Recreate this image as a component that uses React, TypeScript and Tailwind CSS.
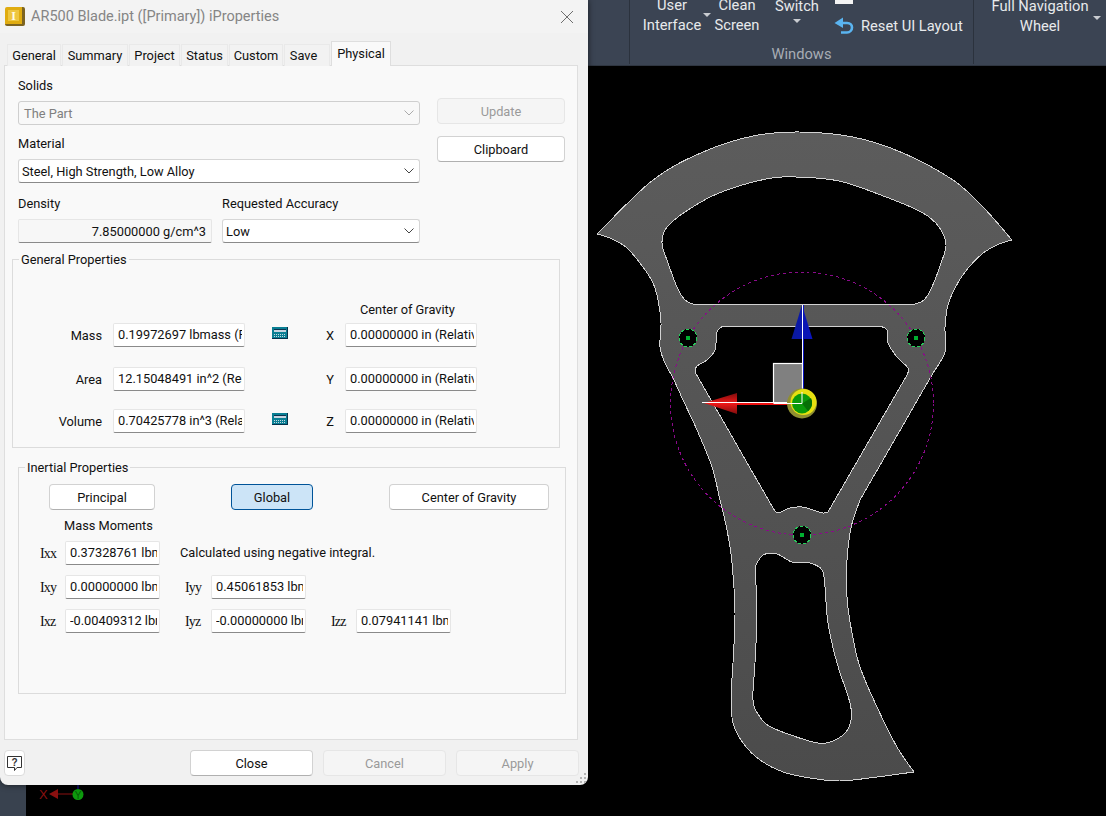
import React from "react";

type P = [number, number];
function seg(pts: P[], move = true): string {
  let d = move ? `M${pts[0][0]} ${pts[0][1]}` : `L${pts[0][0]} ${pts[0][1]}`;
  for (let i = 0; i < pts.length - 1; i++) {
    const p0 = pts[i - 1] || pts[i];
    const p1 = pts[i];
    const p2 = pts[i + 1];
    const p3 = pts[i + 2] || p2;
    const c1 = [p1[0] + (p2[0] - p0[0]) / 6, p1[1] + (p2[1] - p0[1]) / 6];
    const c2 = [p2[0] - (p3[0] - p1[0]) / 6, p2[1] - (p3[1] - p1[1]) / 6];
    d += `C${c1[0].toFixed(1)} ${c1[1].toFixed(1)} ${c2[0].toFixed(1)} ${c2[1].toFixed(1)} ${p2[0]} ${p2[1]}`;
  }
  return d;
}

const outer =
  seg([[597, 234], [653, 180], [703, 152], [753, 136], [799, 132], [853, 137], [903, 153], [953, 180], [983, 207], [1012, 240]]) +
  seg([[1012, 240], [999, 244], [982, 254], [965, 272], [955, 288], [948, 305], [945, 327], [945, 352], [933, 373]], false) +
  seg([[860, 500], [853, 520], [850, 533], [847, 560], [847, 597], [852, 633], [860, 667], [877, 707], [897, 747], [914, 772]], false) +
  seg([[914, 772], [877, 777], [840, 781], [810, 778], [783, 772], [760, 760], [743, 743], [733, 723], [731, 697], [733, 663], [735, 613], [732, 563], [727, 530], [720, 500], [712, 467], [697, 430], [683, 400], [673, 378], [665, 363], [660, 347], [661, 323], [658, 300], [653, 283], [643, 267], [627, 248], [610, 238], [597, 234]], false) +
  "Z";
const hole1 =
  seg([[693, 304], [685, 300], [677, 287], [668, 263], [662, 243], [667, 227], [688, 210], [719, 193], [766, 179], [796, 177], [839, 181], [886, 197], [923, 213], [939, 227], [946, 245], [941, 263], [932, 287], [924, 300], [915, 304]]) + "Z";
const hole2 =
  seg([[880, 326], [887, 330], [888, 343], [897, 357], [908, 368], [907, 375]]) +
  seg([[828, 512], [823, 513], [813, 510], [802, 507], [790, 508], [778, 513], [773, 508]], false) +
  seg([[695, 372], [697, 366], [707, 360], [715, 350], [717, 332], [723, 326]], false) + "Z";
const hole3 =
  seg([[755, 567], [763, 555], [777, 554], [792, 562], [810, 563], [822, 570], [825, 587], [828, 623], [837, 663], [850, 703], [851, 720], [845, 733], [830, 742], [813, 742], [773, 728], [760, 717], [753, 700], [755, 663], [757, 613], [755, 567]]) + "Z";

function Chevron({ dim }: { dim?: boolean }) {
  return (
    <svg width="10" height="6" viewBox="0 0 10 6" className="shrink-0">
      <polyline points="0.5,0.5 5,5 9.5,0.5" fill="none" stroke={dim ? "#aaaaaa" : "#444444"} strokeWidth="1" />
    </svg>
  );
}

function Combo({ text, dim, className }: { text: string; dim?: boolean; className: string }) {
  return (
    <div className={`flex h-6 items-center justify-between rounded-[3px] border pr-[5px] ${dim ? "border-[#cfcfcf] bg-[#f8f8f8] pl-[5px] text-[#808080]" : "border-[#d6d6d6] border-b-[#8a8a8a] bg-white pl-[3px]"} ${className}`}>
      <span className="pt-px">{text}</span>
      <Chevron dim={dim} />
    </div>
  );
}

function Btn({ text, kind = "normal", className }: { text: string; kind?: "normal" | "dim" | "active"; className: string }) {
  const look =
    kind === "dim"
      ? "border-[#e6e6e6] bg-[#f5f5f5] text-[#9a9a9a]"
      : kind === "active"
      ? "border-[#005499] bg-[#cce4f7]"
      : "border-[#d2d2d2] border-b-[#b0b0b0] bg-white";
  return <div className={`flex h-[26px] items-center justify-center rounded-[4px] border pt-px ${look} ${className}`}>{text}</div>;
}

function Field({ text, className }: { text: string; className: string }) {
  return (
    <div className={`h-6 shrink-0 rounded-[2px] border border-[#e6e6e6] border-b-[#8a8a8a] bg-white pl-[4px] pr-[2px] leading-[22px] ${className}`}>
      <div className="overflow-hidden whitespace-nowrap">{text}</div>
    </div>
  );
}

function Calc() {
  return (
    <svg width="16" height="12" viewBox="0 0 16 12" className="mb-1 shrink-0">
      <rect x="0" y="0" width="16" height="12" fill="#0a7f94" />
      <path d="M0 11.5H16M15.5 0V12" stroke="#05304a" strokeWidth="1" />
      <rect x="2" y="2" width="12" height="3" fill="#c8d4e0" />
      <path d="M2 2.5H14" stroke="#0b3350" strokeWidth="1" />
      <path d="M2 7.5H14M2 9.5H14" stroke="#c4d8e0" strokeWidth="1" strokeDasharray="1 1" />
    </svg>
  );
}

function GenRow({ label, axis, value, axisValue, calc, className }: { label: string; axis: string; value: string; axisValue: string; calc?: boolean; className: string }) {
  return (
    <div className={`flex h-6 items-center ${className}`}>
      <div className="w-[89px] pt-[2px] text-right">{label}</div>
      <Field text={value} className="ml-[11px] w-[132px]" />
      <div className="ml-[27px] flex w-4 justify-center">{calc && <Calc />}</div>
      <div className="ml-[34px] w-4 pt-[2px] text-center">{axis}</div>
      <Field text={axisValue} className="ml-[7px] w-[132px]" />
    </div>
  );
}

function ILabel({ text, className }: { text: string; className: string }) {
  return <div className={`pt-[1px] font-['Liberation_Serif',serif] text-[14px] tracking-[-0.8px] ${className}`}>{text}</div>;
}

const tabs: [string, string][] = [
  ["General", "w-[54px]"],
  ["Summary", "w-[66px]"],
  ["Project", "w-[51px]"],
  ["Status", "w-[47px]"],
  ["Custom", "w-[54px]"],
  ["Save", "w-[46px] pr-[7px]"],
];

function Dialog() {
  return (
    <div className="absolute left-0 top-0 flex h-[785px] w-[588px] flex-col rounded-b-[8px] bg-[#f1f1f1] font-['Roboto',sans-serif] text-[12.8px] text-[#111111] shadow-[0_0_6px_rgba(0,0,0,0.6)]">
      <div className="flex h-[33px] shrink-0 items-center bg-[#f3f3f3] pl-[5px] pr-[14px]">
        <div className="flex h-[19px] w-5 items-center justify-center rounded-[2px] border-b-2 border-r-[3px] border-[#7d6420] bg-[#e0ac10]">
          <div className="flex h-[11px] w-[11px] items-center justify-center bg-[#eec640] font-['Liberation_Serif',serif] text-[12px] font-bold leading-none text-[#fffbe8]">I</div>
        </div>
        <div className="ml-[6px] flex-1 text-[14.5px] text-[#858585]">AR500 Blade.ipt ([Primary]) iProperties</div>
        <svg width="14" height="14" viewBox="0 0 14 14">
          <path d="M1 1L13 13M13 1L1 13" stroke="#6e6e6e" strokeWidth="1" />
        </svg>
      </div>

      <div className="z-10 -mb-px flex h-[33px] shrink-0 items-end pl-[7px]">
        {tabs.map(([t, w]) => (
          <div key={t} className={`mr-px flex h-[22px] items-center justify-center border-x border-t border-[#e9e9e9] bg-[#f2f2f2] pt-px ${w}`}>{t}</div>
        ))}
        <div className="flex h-[25px] w-[60px] items-center justify-center border-x border-t border-[#dedede] bg-[#f9f9f9] pb-[1px]">Physical</div>
      </div>

      <div className="ml-1 h-[675px] w-[574px] shrink-0 border border-[#dedede] bg-[#f9f9f9]">
        <div className="flex pl-[13px]">
          <div className="w-[402px]">
            <div className="mt-3 h-4 leading-4">Solids</div>
            <Combo text="The Part" dim className="mt-[7px] w-full" />
            <div className="mt-[10px] h-4 pt-px leading-4">Material</div>
            <Combo text="Steel, High Strength, Low Alloy" className="mt-2 w-full" />
            <div className="mt-3 flex h-4 pt-px leading-4">
              <div className="w-[204px]">Density</div>
              <div>Requested Accuracy</div>
            </div>
            <div className="mt-2 flex gap-[10px]">
              <div className="flex h-6 w-[194px] items-center justify-end rounded-[2px] border border-[#e6e6e6] border-b-[#8a8a8a] bg-[#f7f7f7] pr-[5px] pt-px">7.85000000 g/cm^3</div>
              <Combo text="Low" className="w-[198px]" />
            </div>
          </div>
          <div className="ml-[17px] w-[128px] pt-8">
            <Btn text="Update" kind="dim" className="w-full" />
            <Btn text="Clipboard" className="mt-3 w-full" />
          </div>
        </div>

        <div className="relative ml-[7px] mt-4 h-[189px] w-[548px] border border-[#dcdcdc] pt-[42px]">
          <div className="absolute -top-[8px] left-[6px] bg-[#f9f9f9] px-[2px] leading-4">General Properties</div>
          <div className="ml-[347px] h-4 leading-4">Center of Gravity</div>
          <GenRow label="Mass" axis="X" value="0.19972697 lbmass (Relative" axisValue="0.00000000 in (Relative" calc className="mt-[5px]" />
          <GenRow label="Area" axis="Y" value="12.15048491 in^2 (Relative" axisValue="0.00000000 in (Relative" className="mt-5" />
          <GenRow label="Volume" axis="Z" value="0.70425778 in^3 (Relative" axisValue="0.00000000 in (Relative" calc className="mt-[18px]" />
        </div>

        <div className="relative ml-[13px] mt-[19px] h-[227px] w-[548px] border border-[#dcdcdc] pt-4">
          <div className="absolute -top-[8px] left-[6px] bg-[#f9f9f9] px-[2px] leading-4">Inertial Properties</div>
          <div className="flex">
            <Btn text="Principal" className="ml-[30px] w-[106px]" />
            <Btn text="Global" kind="active" className="ml-[76px] w-[82px]" />
            <Btn text="Center of Gravity" className="ml-[76px] w-[160px]" />
          </div>
          <div className="ml-[45px] mt-[7px] h-4 pt-px leading-4">Mass Moments</div>
          <div className="mt-2 flex h-6 items-center">
            <ILabel text="Ixx" className="ml-[21px] w-[25px]" />
            <Field text="0.37328761 lbm" className="w-[95px]" />
            <div className="ml-5">Calculated using negative integral.</div>
          </div>
          <div className="mt-[10px] flex h-6 items-center">
            <ILabel text="Ixy" className="ml-[21px] w-[25px]" />
            <Field text="0.00000000 lbm" className="w-[95px]" />
            <ILabel text="Iyy" className="ml-[25px] w-[26px]" />
            <Field text="0.45061853 lbm" className="w-[95px]" />
          </div>
          <div className="mt-[10px] flex h-6 items-center">
            <ILabel text="Ixz" className="ml-[21px] w-[25px]" />
            <Field text="-0.00409312 lbm" className="w-[95px]" />
            <ILabel text="Iyz" className="ml-[25px] w-[26px]" />
            <Field text="-0.00000000 lbm" className="w-[95px]" />
            <ILabel text="Izz" className="ml-[25px] w-[25px]" />
            <Field text="0.07941141 lbm" className="w-[95px]" />
          </div>
        </div>
      </div>

      <div className="relative flex flex-1 pl-1 pt-[10px]">
        <div className="flex h-[26px] w-[21px] items-center justify-center rounded-[4px] border border-[#dcdcdc] bg-white">
          <svg width="17" height="17" viewBox="0 0 17 17">
            <path d="M1.5 1.5H15.5V12.5H11L8.5 15.5V12.5H1.5Z" fill="none" stroke="#333333" strokeWidth="1" />
            <text x="8.5" y="10.5" textAnchor="middle" fontSize="10" fontWeight="700" fontFamily="Liberation Sans" fill="#333333">?</text>
          </svg>
        </div>
        <Btn text="Close" className="ml-[165px] w-[123px]" />
        <Btn text="Cancel" kind="dim" className="ml-[10px] w-[123px]" />
        <Btn text="Apply" kind="dim" className="ml-[10px] w-[123px]" />
        <svg width="12" height="12" viewBox="0 0 12 12" className="absolute bottom-px right-px">
          <path d="M9 1h2v2H9zM5 5h2v2H5zM9 5h2v2H9zM1 9h2v2H1zM5 9h2v2H5zM9 9h2v2H9z" fill="#b4b4b4" />
        </svg>
      </div>
    </div>
  );
}

function Tri({ className }: { className: string }) {
  return (
    <svg width="8" height="4" viewBox="0 0 8 4" className={className}>
      <polygon points="0,0 8,0 4,4" fill="#c9ccd1" />
    </svg>
  );
}

function Ribbon() {
  return (
    <div className="flex h-[66px] shrink-0 overflow-hidden border-b border-[#2f3641] bg-[#3b4453] pl-[629px] font-['Roboto',sans-serif] text-[14.7px] leading-5 text-[#e8eaec]">
      <div className="flex h-[64px] w-[345px] shrink-0 flex-col border-x border-[#2b323d]">
        <div className="-mt-[5px] flex h-[51px] items-start">
          <div className="ml-[11px] w-[62px] text-center">
            <div>User</div>
            <div>Interface</div>
          </div>
          <Tri className="mt-[18px] w-2" />
          <div className="w-[52px] text-center">
            <div>Clean</div>
            <div>Screen</div>
          </div>
          <div className="ml-1 flex w-[60px] flex-col items-center pt-px">
            <div>Switch</div>
            <Tri className="mt-[3px]" />
          </div>
          <div className="ml-[7px] pt-[5px]">
            <div className="ml-px h-1 w-[18px] bg-[#f4f4f4]" />
            <div className="mt-[12px] flex items-center">
              <svg width="20" height="18" viewBox="0 0 20 18" className="shrink-0">
                <polygon points="0.5,6 9,0.5 9,11" fill="#5ab4f0" />
                <path d="M7 6H13C16.5 6 18 8.5 18 10.5C18 13 16 15.5 13 15.5H7" fill="none" stroke="#5ab4f0" strokeWidth="2.6" />
              </svg>
              <span className="ml-[7px] whitespace-nowrap">Reset UI Layout</span>
            </div>
          </div>
        </div>
        <div className="h-4 text-center leading-4 text-[#a8adb5]">Windows</div>
      </div>
      <div className="relative -mt-1 w-[132px] shrink-0 text-center">
        <div>Full Navigation</div>
        <div>Wheel</div>
        <Tri className="absolute right-[5px] top-[20px]" />
      </div>
    </div>
  );
}

function Hole({ cx, cy }: { cx: number; cy: number }) {
  return (
    <g shapeRendering="crispEdges">
      <circle cx={cx} cy={cy} r="9" fill="#000000" />
      <circle cx={cx} cy={cy} r="9" fill="none" stroke="#24d05a" strokeWidth="1" strokeDasharray="3 2" />
      <rect x={cx - 2} y={cy - 2} width="4" height="4" fill="#00b030" />
    </g>
  );
}

function Scene() {
  return (
    <svg width="1080" height="750" viewBox="26 66 1080 750" className="block">
      <defs>
        <linearGradient id="bladeFill" x1="0" y1="0" x2="0" y2="1">
          <stop offset="0" stopColor="#5c5c5c" />
          <stop offset="1" stopColor="#4b4b4b" />
        </linearGradient>
        <linearGradient id="redCone" x1="0" y1="0" x2="0" y2="1">
          <stop offset="0" stopColor="#7d0d0d" />
          <stop offset="0.5" stopColor="#f01818" />
          <stop offset="1" stopColor="#7d0d0d" />
        </linearGradient>
        <linearGradient id="blueCone" x1="0" y1="0" x2="1" y2="0">
          <stop offset="0" stopColor="#0a1a9a" />
          <stop offset="1" stopColor="#0a14c0" />
        </linearGradient>
      </defs>
      <path d={`${outer}${hole1}${hole2}${hole3}`} fill="url(#bladeFill)" fillRule="evenodd" stroke="#d2d2d2" strokeWidth="1" shapeRendering="crispEdges" />
      <circle cx="802" cy="403.5" r="131.5" fill="none" stroke="#8a0a8a" strokeWidth="1" strokeDasharray="3 3" shapeRendering="crispEdges" />
      <Hole cx={688} cy={338} />
      <Hole cx={916} cy={338} />
      <Hole cx={802} cy={535} />

      <rect x="773.5" y="363.5" width="29" height="39.5" fill="#808080" stroke="#ffffff" strokeWidth="1.2" />
      <polygon points="802,305 791.5,339 812.5,339" fill="url(#blueCone)" />
      <line x1="802.5" y1="305" x2="802.5" y2="403" stroke="#ffffff" strokeWidth="1" />
      <line x1="803.5" y1="305" x2="803.5" y2="403" stroke="#0a14c0" strokeWidth="1" />
      <polygon points="704,403 737,393 737,414" fill="url(#redCone)" />
      <line x1="702" y1="402.5" x2="790" y2="402.5" stroke="#ffffff" strokeWidth="1" />
      <line x1="737" y1="404" x2="790" y2="404" stroke="#ee1010" strokeWidth="2" />
      <circle cx="802" cy="403.5" r="15" fill="#8f8f30" />
      <circle cx="803.5" cy="402" r="13" fill="#e6e010" />
      <circle cx="802" cy="403.5" r="10" fill="#0a9a0a" />
      <path d="M802 403.5L811 398A10 10 0 0 1 808 411Z" fill="#067006" />
      <path d="M802 392V403.5H773.5" fill="none" stroke="#ffffff" strokeWidth="1" />

      <text x="39" y="799" fontSize="13" fontFamily="Liberation Sans" fill="#8b1010">X</text>
      <polygon points="49,794 58,789 58,799" fill="#8b1010" />
      <line x1="58" y1="794" x2="73" y2="794" stroke="#8b1010" strokeWidth="1" />
      <line x1="78" y1="785" x2="78" y2="789" stroke="#1a1ab0" strokeWidth="1" />
      <circle cx="78" cy="794.5" r="5.5" fill="#0d9a0d" />
      <text x="78" y="798.5" textAnchor="middle" fontSize="10" fontFamily="Liberation Sans" fill="#065c06">Y</text>
    </svg>
  );
}

export default function App() {
  return (
    <div className="relative h-[816px] w-[1106px] overflow-hidden bg-black">
      <Ribbon />
      <div className="flex h-[750px]">
        <div className="w-[26px] shrink-0 bg-[#39424f]" />
        <div className="flex-1 bg-black">
          <Scene />
        </div>
      </div>
      <Dialog />
    </div>
  );
}
